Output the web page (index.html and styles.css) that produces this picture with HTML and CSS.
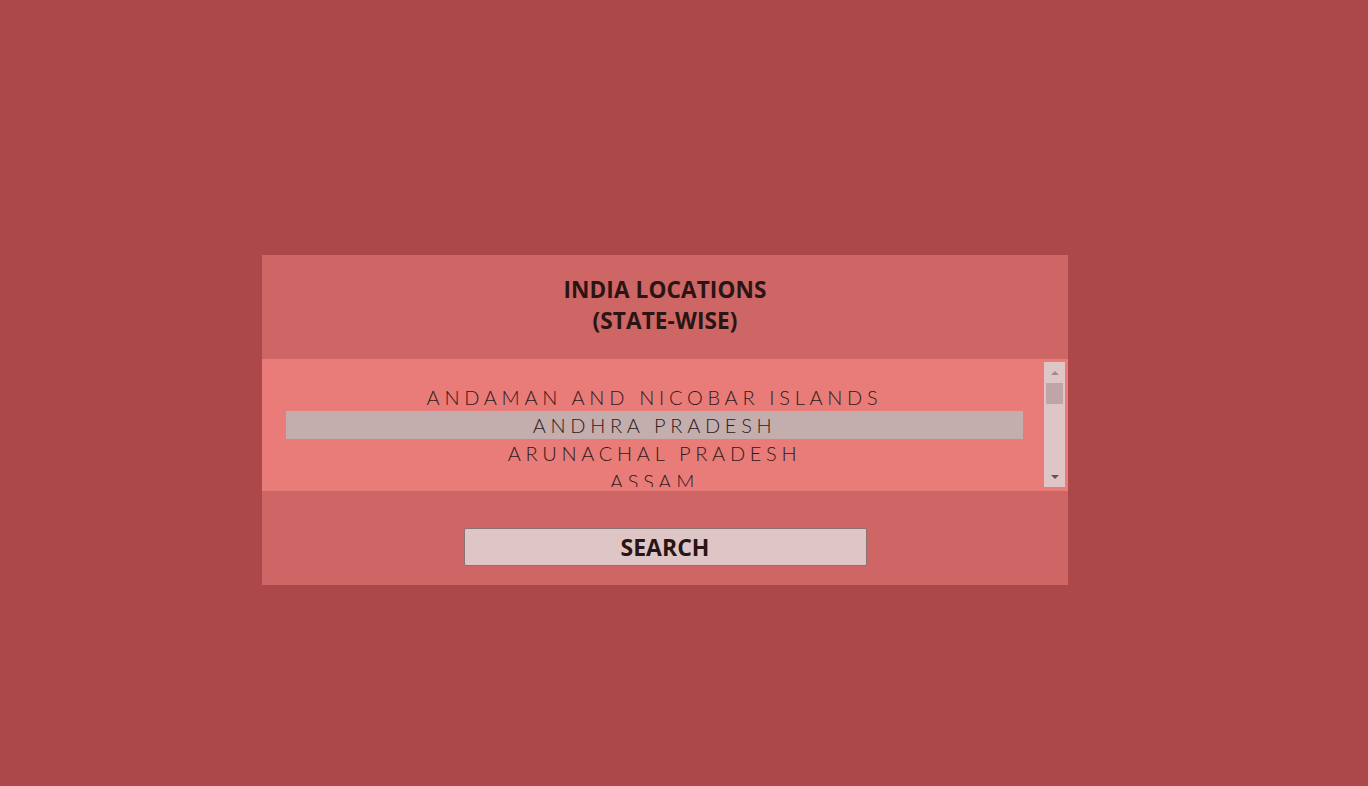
FILE: index.html
```html
<!DOCTYPE html>
<html>
<head>
<meta charset="utf-8">
<link rel="stylesheet" href="styles.css">
</head>
<body>
<div class="page">
  <div class="panel">
    <div class="head">
      <h1 class="title">INDIA LOCATIONS<br>(STATE-WISE)</h1>
    </div>
    <div class="listbox">
      <div class="options">
        <div class="opt">ANDAMAN AND NICOBAR ISLANDS</div>
        <div class="opt sel">ANDHRA PRADESH</div>
        <div class="opt">ARUNACHAL PRADESH</div>
        <div class="opt">ASSAM</div>
      </div>
      <div class="scrollbar">
        <div class="arrow up"></div>
        <div class="thumb"></div>
        <div class="track"></div>
        <div class="arrow down"></div>
      </div>
    </div>
    <div class="foot">
      <button class="btn">SEARCH</button>
    </div>
  </div>
</div>
</body>
</html>
```

FILE: styles.css
```css
html, body {
  margin: 0;
  padding: 0;
  background: #ac474a;
  height: 100%;
}
.page {
  height: 786px;
  display: flex;
  justify-content: flex-start;
  padding: 255px 0 0 262px;
  box-sizing: border-box;
}
.panel {
  width: 806px;
  height: 330px;
  background: #cd6664;
  display: flex;
  flex-direction: column;
}
.head {
  height: 104px;
  display: flex;
  align-items: center;
  justify-content: center;
}
.title {
  margin: 0;
  font-family: "Open Sans", "Liberation Sans", sans-serif;
  font-weight: 700;
  font-size: 22.6px;
  line-height: 31px;
  letter-spacing: 0.1px;
  color: #2a1414;
  text-align: center;
  padding-bottom: 4px;
}
.listbox {
  height: 132px;
  background: #e97b78;
  padding: 3px 3px 4px 3px;
  box-sizing: border-box;
  display: flex;
}
.options {
  flex: 1;
  overflow: hidden;
  padding: 21px 21px 0 21px;
}
.opt {
  height: 28px;
  line-height: 28px;
  text-align: center;
  font-family: "Lato", "Open Sans", sans-serif;
  font-weight: 300;
  font-size: 20px;
  letter-spacing: 4.7px;
  color: #2e1a1a;
}
.opt.sel {
  background: #c4adad;
}
.scrollbar {
  width: 21px;
  background: #dfc6c6;
  display: flex;
  flex-direction: column;
  align-items: center;
}
.arrow {
  height: 21px;
  width: 21px;
  display: flex;
  align-items: center;
  justify-content: center;
}
.arrow.up::before {
  content: "";
  border-left: 4px solid transparent;
  border-right: 4px solid transparent;
  border-bottom: 4px solid #a58c8c;
}
.arrow.down::before {
  content: "";
  border-left: 4px solid transparent;
  border-right: 4px solid transparent;
  border-top: 4px solid #6b5050;
}
.thumb {
  width: 17px;
  height: 21px;
  background: #bfa5a7;
}
.track {
  flex: 1;
}
.foot {
  flex: 1;
  display: flex;
  justify-content: center;
  padding-top: 37px;
  box-sizing: border-box;
}
.btn {
  width: 403px;
  height: 38px;
  background: #dec6c6;
  border: 1px solid #8a7373;
  border-radius: 2px;
  font-family: "Open Sans", "Liberation Sans", sans-serif;
  font-weight: 700;
  font-size: 23px;
  letter-spacing: 0;
  color: #2a1414;
  padding: 0;
  line-height: 36px;
}
```
